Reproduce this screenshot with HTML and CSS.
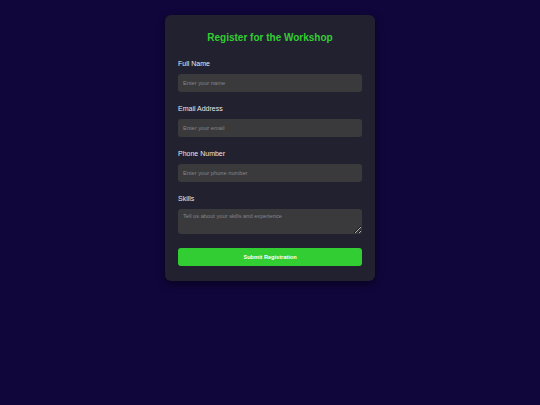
FILE: index.html
```html
<!DOCTYPE html>
<html lang="en">
<head>
  <meta charset="UTF-8" />
  <meta name="viewport" content="width=device-width, initial-scale=1.0" />
  <title>Workshop Registration</title>
  <link rel="stylesheet" href="styles.css">
</head>
<body>
  <main>
    <form class="card" onsubmit="return false;">
      <h2>Register for the Workshop</h2>
      <div class="field">
        <label for="name">Full Name</label>
        <input type="text" id="name" placeholder="Enter your name" />
      </div>
      <div class="field">
        <label for="email">Email Address</label>
        <input type="email" id="email" placeholder="Enter your email" />
      </div>
      <div class="field">
        <label for="phone">Phone Number</label>
        <input type="tel" id="phone" placeholder="Enter your phone number" />
      </div>
      <div class="field">
        <label for="skills">Skills</label>
        <textarea id="skills" placeholder="Tell us about your skills and experience"></textarea>
      </div>
      <button type="submit">Submit Registration</button>
    </form>
  </main>
</body>
</html>
```

FILE: styles.css
```css
:root {
  --bg: #10063b;
  --card: #22212f;
  --field: #3a3a3c;
  --text: #e8e8ea;
  --muted: #85858a;
  --accent: #32cd32;
}

html, body {
  margin: 0;
  padding: 0;
  height: 100%;
  background: var(--bg);
  color: var(--text);
  font-family: "Liberation Sans", Arial, sans-serif;
}

main {
  display: flex;
  justify-content: center;
  padding-top: 15px;
}

.card {
  width: 210px;
  box-sizing: border-box;
  background: var(--card);
  border-radius: 6px;
  padding: 13px 13px 15px;
  box-shadow: 0 3px 8px rgba(0, 0, 0, 0.45);
  display: flex;
  flex-direction: column;
}

.card h2 {
  margin: 4px 0 16px;
  font-size: 10px;
  line-height: 12px;
  text-align: center;
  color: var(--accent);
  font-weight: bold;
}

.field {
  display: flex;
  flex-direction: column;
  gap: 6px;
  margin-bottom: 13px;
}

.field label {
  font-size: 7px;
  line-height: 8px;
  color: var(--text);
}

.field input,
.field textarea {
  box-sizing: border-box;
  width: 100%;
  height: 18px;
  margin: 0;
  padding: 0 5px;
  border: none;
  border-radius: 3px;
  background: var(--field);
  color: var(--text);
  font-family: inherit;
  font-size: 5.7px;
  outline: none;
}

.field textarea {
  height: 25px;
  padding: 4px 5px;
  resize: vertical;
}

.field input::placeholder,
.field textarea::placeholder {
  color: var(--muted);
}

button {
  margin-top: 1px;
  height: 18px;
  border: none;
  border-radius: 3px;
  background: var(--accent);
  color: #ffffff;
  font-family: inherit;
  font-size: 5.6px;
  font-weight: bold;
  cursor: pointer;
}
```
